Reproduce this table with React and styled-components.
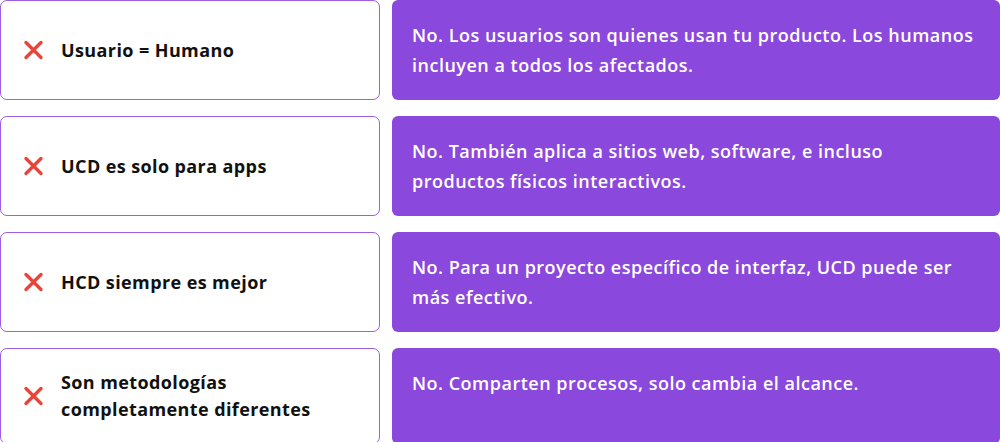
import React from 'react';
import styled, { createGlobalStyle } from 'styled-components';

const GlobalStyle = createGlobalStyle`
  body {
    margin: 0;
    background: #ffffff;
    font-family: "Open Sans", "Noto Sans", sans-serif;
  }
`;

const List = styled.div`
  display: flex;
  flex-direction: column;
  gap: 16px;
  width: 1000px;
`;

const Row = styled.div`
  display: grid;
  grid-template-columns: 380px 1fr;
  gap: 12px;
`;

const Myth = styled.div`
  display: flex;
  align-items: center;
  gap: 17px;
  padding: 20px 22px;
  border: 1.5px solid #9b5fe0;
  border-radius: 7px;
  background: #fff;
`;

const MythText = styled.span`
  max-width: 262px;
  font-size: 18px;
  font-weight: 700;
  line-height: 27px;
  letter-spacing: 0.4px;
  color: #111;
`;

const Answer = styled.div`
  padding: 20px 20px;
  border-radius: 6px;
  background: #8b48dc;
  color: #fff;
  font-size: 18px;
  font-weight: 600;
  line-height: 30px;
  letter-spacing: 0.5px;
`;

const Cross = () => (
  <svg width="21" height="20" viewBox="0 0 21 20" style={{ flexShrink: 0 }}>
    <path d="M3 2.5 L18 17.5 M18 2.5 L3 17.5" stroke="#e9443a" strokeWidth="3.4" strokeLinecap="round" />
  </svg>
);

const items = [
  ['Usuario = Humano', 'No. Los usuarios son quienes usan tu producto. Los humanos incluyen a todos los afectados.'],
  ['UCD es solo para apps', 'No. También aplica a sitios web, software, e incluso productos físicos interactivos.'],
  ['HCD siempre es mejor', 'No. Para un proyecto específico de interfaz, UCD puede ser más efectivo.'],
  ['Son metodologías completamente diferentes', 'No. Comparten procesos, solo cambia el alcance.'],
];

export default function App() {
  return (
    <>
      <GlobalStyle />
      <List>
        {items.map(([myth, answer]) => (
          <Row key={myth}>
            <Myth>
              <Cross />
              <MythText>{myth}</MythText>
            </Myth>
            <Answer>{answer}</Answer>
          </Row>
        ))}
      </List>
    </>
  );
}
